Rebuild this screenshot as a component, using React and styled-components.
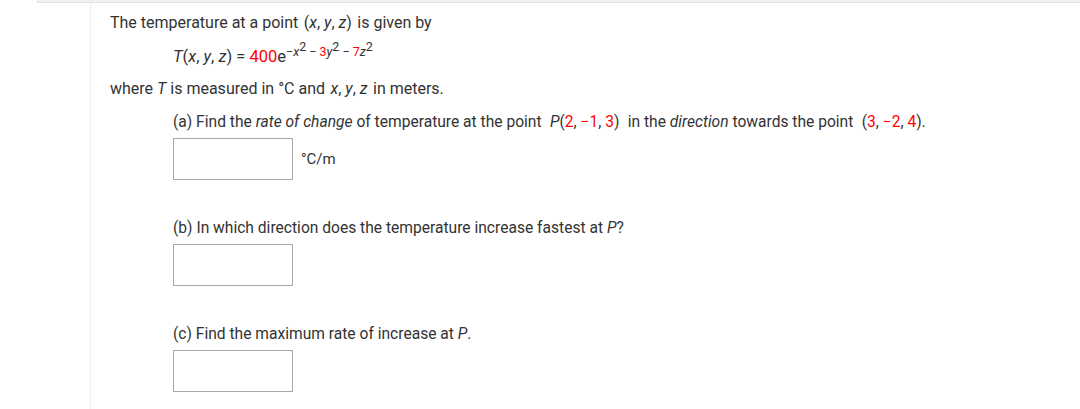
import styled, { createGlobalStyle } from 'styled-components'

const GlobalStyle = createGlobalStyle`
  html, body {
    margin: 0;
    padding: 0;
    background: #fff;
  }
  body {
    font-family: Roboto, "Liberation Sans", sans-serif;
    font-size: 16px;
    color: #333;
  }
`

const App = () => {
  return (
    <>
      <GlobalStyle />
      <TopStrip />
      <Layout>
        <Gutter />
        <Content>
          <Line>
            The temperature at a point <MathSpan>(<I>x</I>, <I>y</I>, <I>z</I>)</MathSpan> is given by
          </Line>
          <Formula>
            <I>T</I>(<I>x</I>, <I>y</I>, <I>z</I>) = <Red>400</Red>e
            <Exp>
              −<I>x</I><Sup>2</Sup> − <Red>3</Red><I>y</I><Sup>2</Sup> − <Red>7</Red><I>z</I><Sup>2</Sup>
            </Exp>
          </Formula>
          <Line gap={12}>
            where <I>T</I> is measured in °C and <MathSpan><I>x</I>, <I>y</I>, <I>z</I></MathSpan> in meters.
          </Line>
          <Part>
            <Line gap={13}>
              (a) Find the <I>rate of change</I> of temperature at the point{' '}
              <MathSpan space={4.5}>
                <I>P</I>(<Red>2</Red>, <Red>−1</Red>, <Red>3</Red>)
              </MathSpan>{' '}
              in the <I>direction</I> towards the point{' '}
              <MathSpan space={4.5}>
                (<Red>3</Red>, <Red>−2</Red>, <Red>4</Red>).
              </MathSpan>
            </Line>
            <AnswerRow>
              <AnswerBox />
              <Unit>°C/m</Unit>
            </AnswerRow>
            <Line gap={38}>
              (b) In which direction does the temperature increase fastest at <I>P</I>?
            </Line>
            <AnswerRow>
              <AnswerBox />
            </AnswerRow>
            <Line gap={38}>
              (c) Find the maximum rate of increase at <I>P</I>.
            </Line>
            <AnswerRow>
              <AnswerBox />
            </AnswerRow>
          </Part>
        </Content>
      </Layout>
    </>
  )
}

export default App

const TopStrip = styled.div`
  margin-left: 37px;
  height: 2px;
  background: #f1f1f1;
  border-bottom: 1px solid #e2e2e2;
  border-left: 1px solid #e2e2e2;
`

const Layout = styled.div`
  display: flex;
  min-height: 406px;
`

const Gutter = styled.div`
  width: 90px;
  border-right: 1px solid #eeeeee;
  flex-shrink: 0;
`

const Content = styled.div`
  padding: 10px 0 0 19px;
  flex: 1;
`

const Line = styled.div`
  line-height: 20px;
  margin-top: ${({ gap }) => gap || 0}px;
  white-space: nowrap;
`

const Formula = styled.div`
  font-size: 16.5px;
  line-height: 20px;
  margin-top: 14px;
  padding-left: 63px;
  white-space: nowrap;
`

const Exp = styled.span`
  font-size: 12.5px;
  position: relative;
  top: -6px;
  line-height: 0;
`

const Sup = styled.span`
  font-size: 12.5px;
  position: relative;
  top: -5px;
  line-height: 0;
`

const Part = styled.div`
  padding-left: 63px;
  font-size: 15.6px;
`

const I = styled.i`
  font-style: italic;
`

const Red = styled.span`
  color: #ff0000;
`

const MathSpan = styled.span`
  margin: 0 ${({ space }) => space || 1.5}px;
`

const AnswerRow = styled.div`
  display: flex;
  align-items: center;
  gap: 8px;
  margin-top: 6px;
`

const AnswerBox = styled.div`
  width: 118px;
  height: 40px;
  border: 1px solid #a9a9a9;
  background: #fff;
`

const Unit = styled.span`
  font-size: 15px;
  line-height: 20px;
`
